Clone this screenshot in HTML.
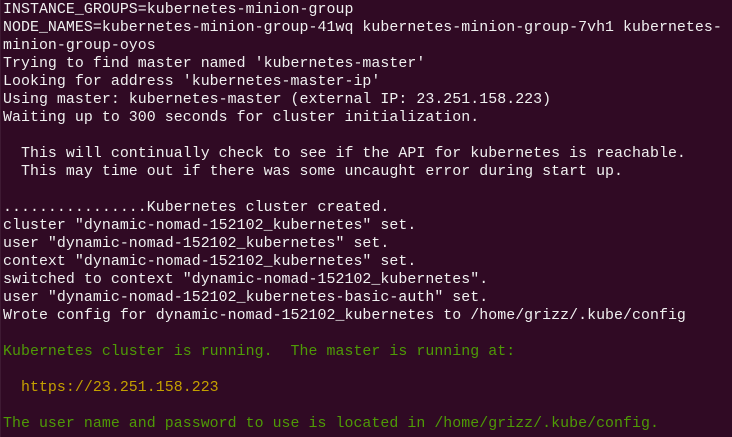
<!DOCTYPE html>
<html><head><meta charset="utf-8"><style>
html,body{margin:0;padding:0;background:#300a24;width:732px;height:437px;overflow:hidden}
body{border-left:1px solid #3e1a33;box-sizing:border-box}
pre{margin:0;padding:1px 0 0 2px;font-family:"Liberation Mono","DejaVu Sans Mono",monospace;font-size:14.9px;letter-spacing:0.05px;line-height:18px;color:#f0f0f0;white-space:pre}
.g{color:#4e9a06}.y{color:#c4a000}
</style></head><body><pre>INSTANCE_GROUPS=kubernetes-minion-group
NODE_NAMES=kubernetes-minion-group-41wq kubernetes-minion-group-7vh1 kubernetes-
minion-group-oyos
Trying to find master named 'kubernetes-master'
Looking for address 'kubernetes-master-ip'
Using master: kubernetes-master (external IP: 23.251.158.223)
Waiting up to 300 seconds for cluster initialization.

  This will continually check to see if the API for kubernetes is reachable.
  This may time out if there was some uncaught error during start up.

................Kubernetes cluster created.
cluster "dynamic-nomad-152102_kubernetes" set.
user "dynamic-nomad-152102_kubernetes" set.
context "dynamic-nomad-152102_kubernetes" set.
switched to context "dynamic-nomad-152102_kubernetes".
user "dynamic-nomad-152102_kubernetes-basic-auth" set.
Wrote config for dynamic-nomad-152102_kubernetes to /home/grizz/.kube/config

<span class="g">Kubernetes cluster is running.  The master is running at:</span>

<span class="y">  https://23.251.158.223</span>

<span class="g">The user name and password to use is located in /home/grizz/.kube/config.</span>
</pre></body></html>
